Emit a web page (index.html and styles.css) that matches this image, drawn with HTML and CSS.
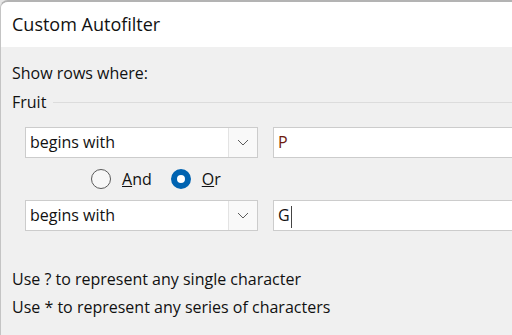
FILE: index.html
```html
<!DOCTYPE html>
<html lang="en">
<head>
    <meta charset="UTF-8">
    <meta name="viewport" content="width=device-width, initial-scale=1.0">
    <title>Custom Autofilter</title>
    <link rel="stylesheet" href="styles.css">
</head>
<body>
    <div class="window">
        <div class="titlebar">Custom Autofilter</div>

        <div class="dialog-body">
            <div class="label">Show rows where:</div>

            <div class="group-title">
                <span>Fruit</span>
                <span class="group-line"></span>
            </div>

            <div class="criteria-row">
                <div class="combo">
                    <span class="combo-text">begins with</span>
                    <span class="combo-button">
                        <svg width="12" height="7" viewBox="0 0 12 7"><path d="M1 1 L6 6 L11 1" fill="none" stroke="#5c5c5c" stroke-width="1"/></svg>
                    </span>
                </div>
                <div class="text-input value-red">P</div>
            </div>

            <div class="radio-row">
                <label class="radio"><span class="radio-circle"></span><span><u>A</u>nd</span></label>
                <label class="radio"><span class="radio-circle checked"></span><span><u>O</u>r</span></label>
            </div>

            <div class="criteria-row">
                <div class="combo">
                    <span class="combo-text">begins with</span>
                    <span class="combo-button">
                        <svg width="12" height="7" viewBox="0 0 12 7"><path d="M1 1 L6 6 L11 1" fill="none" stroke="#5c5c5c" stroke-width="1"/></svg>
                    </span>
                </div>
                <div class="text-input">G<span class="caret"></span></div>
            </div>

            <div class="hints">
                <div class="hint">Use ? to represent any single character</div>
                <div class="hint">Use * to represent any series of characters</div>
            </div>
        </div>
    </div>
</body>
</html>
```

FILE: styles.css
```css
html {
    background-color: #e6e6e6;
}

body {
    margin: 0;
    padding: 0;
    width: 512px;
    height: 335px;
    overflow: hidden;
    font-family: 'Open Sans', sans-serif;
    font-size: 16px;
    color: #111111;
}

.window {
    width: 600px;
    height: 400px;
    border-top: 2px solid #b3b3b3;
    border-left: 1px solid #c4c4c4;
    border-top-left-radius: 8px;
    overflow: hidden;
    background-color: #f0f0f0;
}

.titlebar {
    height: 45px;
    background-color: #ffffff;
    padding-left: 11px;
    font-size: 18px;
    line-height: 45px;
}

.dialog-body {
    padding: 14px 0 0 11px;
}

.label {
    height: 24px;
    line-height: 24px;
}

.group-title {
    display: flex;
    align-items: center;
    height: 30px;
    line-height: 30px;
    margin-top: 2px;
}

.group-line {
    flex: 1;
    height: 1px;
    margin-left: 7px;
    background-color: #dcdcdc;
}

.criteria-row {
    display: flex;
    gap: 15px;
    margin-left: 13px;
}

.group-title + .criteria-row {
    margin-top: 10px;
}

.combo {
    display: flex;
    width: 231px;
    height: 29px;
    border: 1px solid #cccccc;
    background-color: #ffffff;
}

.combo-text {
    flex: 1;
    padding-left: 4px;
    line-height: 29px;
}

.combo-button {
    width: 28px;
    display: flex;
    align-items: center;
    justify-content: center;
    background-color: #f9f9f9;
    border-left: 1px solid #e3e3e3;
}

.text-input {
    flex: 1;
    height: 29px;
    line-height: 29px;
    padding-left: 4px;
    border: 1px solid #cccccc;
    background-color: #ffffff;
}

.value-red {
    color: #6e1a0c;
}

.caret {
    display: inline-block;
    width: 1px;
    height: 22px;
    margin-left: 1px;
    vertical-align: middle;
    background-color: #444444;
}

.radio-row {
    display: flex;
    gap: 19px;
    height: 42px;
    align-items: center;
    margin-left: 79px;
}

.radio {
    display: flex;
    align-items: center;
    gap: 11px;
}

.radio-circle {
    width: 20px;
    height: 20px;
    border: 1px solid #5a5a5a;
    border-radius: 50%;
    background-color: #f7f7f7;
    box-sizing: border-box;
}

.radio-circle.checked {
    border: 6px solid #0063b1;
    background-color: #ffffff;
}

.hints {
    margin-top: 34px;
}

.hint {
    height: 28px;
    line-height: 28px;
}
```
